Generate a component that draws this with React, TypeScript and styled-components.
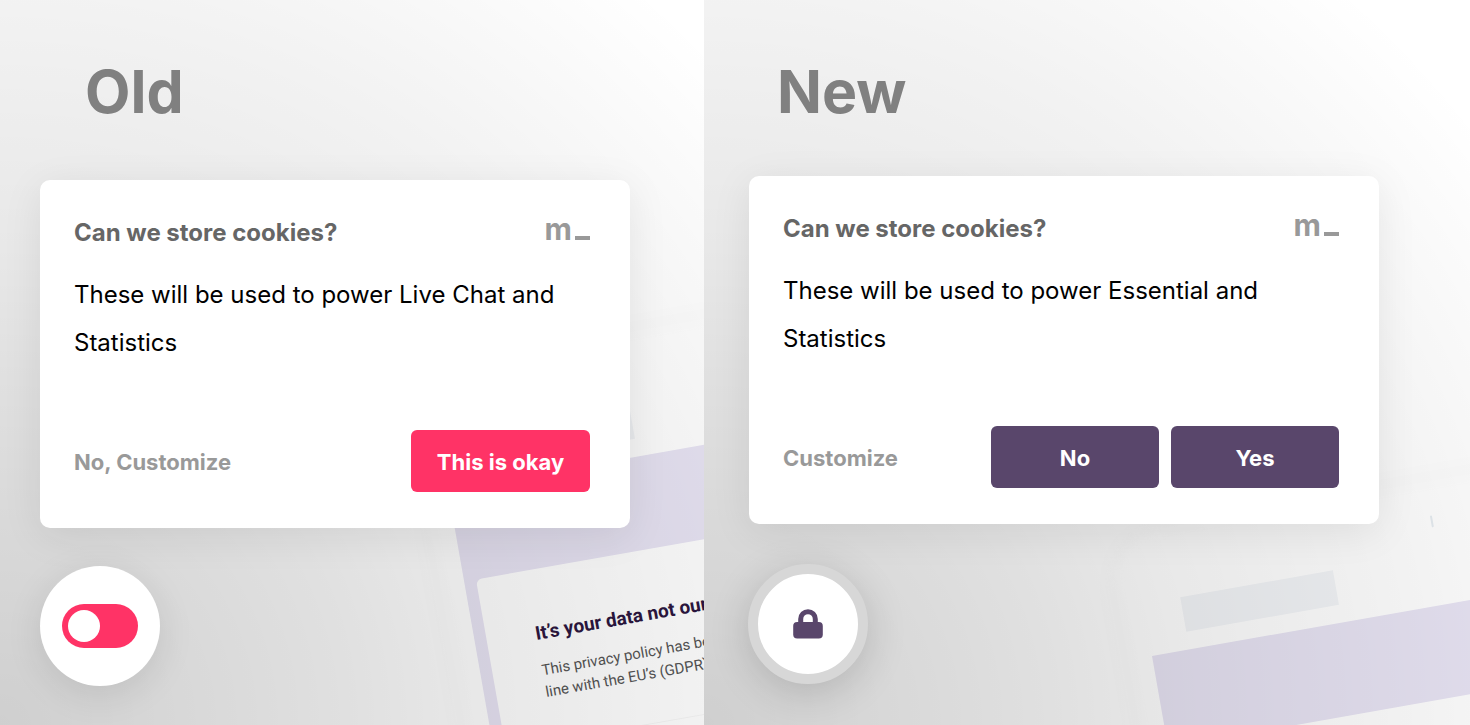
import React from "react";
import styled, { createGlobalStyle } from "styled-components";

const GlobalStyle = createGlobalStyle`
  *, *::before, *::after { box-sizing: border-box; }
  body { margin: 0; background: #fff; }
  body, button, input { font-family: Inter, "Liberation Sans", sans-serif; }
  h2, h3, h4, p { margin: 0; }
`;

const Comparison = styled.main`
  display: grid;
  grid-template-columns: 704fr 766fr;
  min-height: 100vh;
`;

const Panel = styled.section<{ $left: number; $right: number }>`
  position: relative;
  overflow: hidden;
  padding: 60px ${(p) => p.$right}px 38px ${(p) => p.$left}px;
  background: #fff;
`;

const Content = styled.div`
  position: relative;
`;

const PanelTitle = styled.h2<{ $indent: number; $gap: number }>`
  padding-left: ${(p) => p.$indent}px;
  margin-bottom: ${(p) => p.$gap}px;
  font-size: 59px;
  font-weight: 700;
  line-height: 64px;
  color: #808080;
`;

const Card = styled.article`
  display: flex;
  flex-direction: column;
  padding: 37px 40px 36px 34px;
  border-radius: 10px;
  background: #fff;
  box-shadow: 0 8px 40px rgba(0, 0, 0, 0.08);
`;

const CardHeader = styled.header`
  display: flex;
  align-items: flex-start;
  justify-content: space-between;
  margin-bottom: 22px;
`;

const CardTitle = styled.h3`
  font-size: 24px;
  font-weight: 700;
  line-height: 32px;
  color: #666;
`;

const Logo = styled.span`
  display: flex;
  align-items: baseline;
  gap: 3px;
  font-size: 30px;
  font-weight: 700;
  line-height: 24px;
  color: #999;
`;

const LogoBar = styled.span`
  width: 15px;
  height: 4px;
  background: #999;
`;

const CardText = styled.p`
  font-size: 24px;
  line-height: 48px;
  color: #000;
  margin-bottom: 63px;
`;

const CardFooter = styled.footer`
  display: flex;
  align-items: center;
  gap: 12px;
`;

const TextButton = styled.button`
  margin-right: auto;
  padding: 2px 0 0;
  border: 0;
  background: none;
  font-size: 22px;
  font-weight: 700;
  line-height: 32px;
  color: #999;
  cursor: pointer;
`;

const SolidButton = styled.button<{ $color: string; $width: number }>`
  width: ${(p) => p.$width}px;
  height: 62px;
  padding: 2px 0 0;
  border: 0;
  border-radius: 6px;
  background: ${(p) => p.$color};
  font-size: 22px;
  font-weight: 700;
  line-height: 32px;
  color: #fff;
  cursor: pointer;
`;

const SwitchBubble = styled.label`
  display: flex;
  align-items: center;
  justify-content: center;
  width: 120px;
  height: 120px;
  margin-top: 38px;
  border-radius: 50%;
  background: #fff;
  box-shadow: 0 8px 36px rgba(0, 0, 0, 0.1);
  cursor: pointer;
`;

const Switch = styled.input`
  appearance: none;
  display: flex;
  align-items: center;
  width: 76px;
  height: 44px;
  margin: 0;
  padding: 6px;
  border-radius: 22px;
  background: #ff3366;
  cursor: pointer;

  &::before {
    content: "";
    width: 32px;
    height: 32px;
    border-radius: 50%;
    background: #fff;
  }

  &:checked {
    justify-content: flex-end;
  }
`;

const LockBubble = styled.button`
  display: flex;
  align-items: center;
  justify-content: center;
  width: 120px;
  height: 120px;
  margin: 40px 0 0 -1px;
  padding: 0;
  border: 10px solid #d7d7d7;
  border-radius: 50%;
  background: #fff;
  box-shadow: 0 8px 40px rgba(0, 0, 0, 0.16);
  cursor: pointer;
`;

/* Tilted device preview behind the cards; its origin is the banner's corner. */
const Device = styled.div<{ $top: number }>`
  position: absolute;
  left: 448px;
  top: ${(p) => p.$top}px;
  width: 640px;
  height: 640px;
  transform: rotate(-10deg);
  transform-origin: 0 0;
`;

const DeviceFrame = styled.div`
  position: absolute;
  inset: -122px 0 0 -22px;
  border-radius: 48px;
  background: #fff;
  box-shadow: 0 0 32px rgba(0, 0, 0, 0.03);
  filter: blur(5px);
`;

const DeviceMenu = styled.div`
  position: absolute;
  left: 38px;
  top: -53px;
  width: 155px;
  height: 35px;
  background: #f3f5f8;
`;

const DeviceMark = styled.div`
  position: absolute;
  left: 298px;
  top: -90px;
  width: 2px;
  height: 12px;
  border-radius: 1px;
  background: #e6ecf1;
`;

const Banner = styled.div`
  position: absolute;
  inset: 0;
  padding: 93px 0 0 12px;
  background: #e8e4f4;
`;

const Policy = styled.div`
  height: 100%;
  padding: 52px 0 0 49px;
  border-radius: 6px 0 0 0;
  background: #fff;
  white-space: nowrap;
`;

const PolicyTitle = styled.h4`
  margin-bottom: 14px;
  font: bold 19px/24px Roboto, sans-serif;
  color: #2c1640;
`;

const PolicyText = styled.p`
  padding-bottom: 38px;
  border-bottom: 1px solid #f6f6f6;
  font: 15px/22px Roboto, sans-serif;
  color: #555;
`;

const Shade = styled.div`
  position: absolute;
  inset: 0;
  background: radial-gradient(
    circle at 0 100%,
    rgba(0, 0, 0, 0.19) 0,
    rgba(0, 0, 0, 0.12) 350px,
    rgba(0, 0, 0, 0.09) 480px,
    rgba(0, 0, 0, 0.05) 720px,
    rgba(0, 0, 0, 0) 980px
  );
`;

function Backdrop({ top }: { top: number }) {
  return (
    <>
      <Device $top={top}>
        <DeviceFrame />
        <DeviceMenu />
        <DeviceMark />
        <Banner>
          <Policy>
            <PolicyTitle>It’s your data not ours</PolicyTitle>
            <PolicyText>
              This privacy policy has been
              <br />
              line with the EU’s (GDPR)
            </PolicyText>
          </Policy>
        </Banner>
      </Device>
      <Shade />
    </>
  );
}

function LockIcon() {
  return (
    <svg width="30" height="30" viewBox="0 0 30 30" aria-hidden="true">
      <path
        d="M7.7 15V10a7.3 7.3 0 0 1 14.6 0v5"
        fill="none"
        stroke="#59466b"
        strokeWidth="5"
      />
      <rect x="0.2" y="13" width="29.6" height="16.6" rx="4" fill="#59466b" />
    </svg>
  );
}

function ConsentCard({
  purposes,
  children,
}: {
  purposes: string;
  children: React.ReactNode;
}) {
  return (
    <Card>
      <CardHeader>
        <CardTitle>Can we store cookies?</CardTitle>
        <Logo>
          m<LogoBar />
        </Logo>
      </CardHeader>
      <CardText>These will be used to power {purposes}</CardText>
      <CardFooter>{children}</CardFooter>
    </Card>
  );
}

export default function App() {
  return (
    <>
      <GlobalStyle />
      <Comparison>
        <Panel $left={40} $right={74}>
          <Backdrop top={490} />
          <Content>
            <PanelTitle $indent={45} $gap={56}>Old</PanelTitle>
            <ConsentCard purposes="Live Chat and Statistics">
              <TextButton type="button">No, Customize</TextButton>
              <SolidButton type="button" $color="#ff3366" $width={179}>
                This is okay
              </SolidButton>
            </ConsentCard>
            <SwitchBubble>
              <Switch type="checkbox" role="switch" aria-label="Cookie consent" />
            </SwitchBubble>
          </Content>
        </Panel>
        <Panel $left={45} $right={91}>
          <Backdrop top={656} />
          <Content>
            <PanelTitle $indent={28} $gap={52}>New</PanelTitle>
            <ConsentCard purposes="Essential and Statistics">
              <TextButton type="button">Customize</TextButton>
              <SolidButton type="button" $color="#59466b" $width={168}>
                No
              </SolidButton>
              <SolidButton type="button" $color="#59466b" $width={168}>
                Yes
              </SolidButton>
            </ConsentCard>
            <LockBubble type="button" aria-label="Privacy settings">
              <LockIcon />
            </LockBubble>
          </Content>
        </Panel>
      </Comparison>
    </>
  );
}
